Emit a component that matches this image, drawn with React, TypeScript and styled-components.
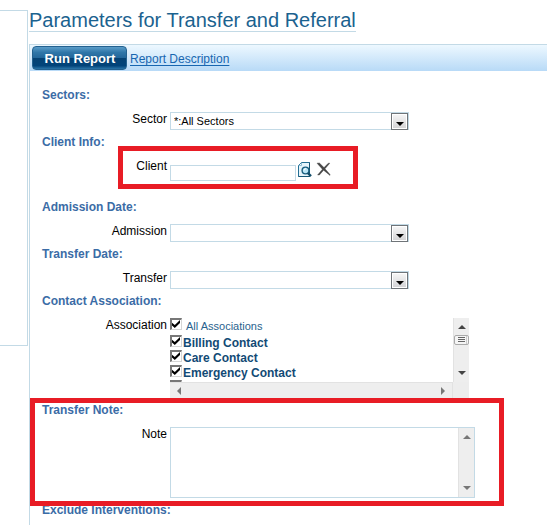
import React from "react";
import styled, { createGlobalStyle, css } from "styled-components";

const line = "#c3dae6";
const sans = '"Liberation Sans", Arial, sans-serif';

const GlobalStyle = createGlobalStyle`
  *, *::before, *::after { box-sizing: border-box; }
  body { margin: 0; background: #fff; font-family: ${sans}; font-size: 12px; color: #000; }
  button, input, select, textarea { font-family: inherit; margin: 0; }
`;

const Page = styled.div`
  display: flex;
  align-items: flex-start;
  gap: 1px;
  min-height: 100vh;
`;

const SidePanel = styled.aside`
  flex: 0 0 28px;
  height: 336px;
  margin-top: 10px;
  border: 1px solid ${line};
  border-left: 0;
`;

const Main = styled.main`
  flex: 1;
  min-width: 0;
  min-height: 100vh;
  padding-top: 9px;
  display: flex;
  flex-direction: column;
  align-items: flex-start;
`;

const Title = styled.h1`
  margin: 0 0 12px;
  border-bottom: 1px solid ${line};
  font-size: 20px;
  line-height: 22px;
  font-weight: 400;
  color: #1b628f;
  white-space: nowrap;
`;

const Panel = styled.div`
  align-self: stretch;
  flex: 1;
  border-top: 1px solid ${line};
  border-left: 1px solid ${line};
`;

const Toolbar = styled.div`
  display: flex;
  align-items: center;
  gap: 3px;
  height: 26px;
  padding-left: 2px;
  background: linear-gradient(#edf8ff, #b8daf7);
`;

const RunButton = styled.button`
  width: 95px;
  height: 24px;
  padding: 0 0 0 1px;
  border: 1px solid #23618f;
  border-radius: 4px;
  background: linear-gradient(#5a9cc8 0%, #2f76a8 25%, #22669a 50%, #054273 51%, #02447a 85%, #2b75a8 100%);
  color: #fff;
  font-size: 13px;
  font-weight: 700;
`;

const ToolbarLink = styled.a`
  color: #1766b0;
  font-size: 12px;
  line-height: 16px;
  padding-top: 2px;
  text-underline-offset: 2px;
`;

const Form = styled.form`
  display: flex;
  flex-direction: column;
  padding: 17px 0 0 12px;
`;

const Section = styled.section`
  position: relative;
  padding-bottom: 5px;
`;

const Heading = styled.h2`
  margin: 0;
  font-size: 12px;
  line-height: 14px;
  font-weight: 700;
  color: #3b6ca6;
`;

const Row = styled.div`
  display: grid;
  grid-template-columns: 125px minmax(0, 1fr);
  column-gap: 3px;
  align-items: start;
  padding-top: 10px;
`;

const labelStyle = css`
  font-size: 12px;
  line-height: 14px;
  text-align: right;
`;
const Label = styled.label`${labelStyle}`;
const GroupLabel = styled.span`${labelStyle}`;

const SelectBox = styled.div`
  display: grid;
  width: 239px;
  max-width: 100%;
  > * { grid-area: 1 / 1; }
`;

const Select = styled.select`
  appearance: none;
  width: 100%;
  height: 18px;
  padding: 0 20px 0 3px;
  border: 1px solid ${line};
  border-radius: 0;
  background: #fff;
  color: #000;
  font-size: 11px;
`;

const DropArrow = styled.span`
  justify-self: end;
  display: flex;
  align-items: flex-end;
  justify-content: center;
  width: 17px;
  height: 17px;
  margin: 1px 1px 0 0;
  padding-bottom: 3px;
  border: 1px solid #6f7478;
  background: linear-gradient(#f7f7f7, #d2d2d4);
  box-shadow: inset 0 0 0 1px #fff;
  pointer-events: none;
`;

const ClientField = styled.div`
  display: flex;
  align-items: flex-start;
  padding-top: 3px;
  height: 36px;
`;

const ClientInput = styled.input`
  width: 126px;
  height: 16px;
  margin-top: 3px;
  padding: 0 3px;
  border: 1px solid ${line};
  background: #fff;
  font-size: 11px;
`;

const IconButton = styled.button`
  display: flex;
  width: 16px;
  height: 16px;
  margin-left: 2px;
  padding: 0;
  border: 0;
  background: none;
`;

const Associations = styled.div`
  display: grid;
  grid-template-columns: minmax(0, 1fr) 16px;
  grid-template-rows: 64px 16px;
  width: 299px;
  max-width: 100%;
`;

const CheckList = styled.ul`
  margin: 0;
  padding: 0;
  overflow: hidden;
  list-style: none;
`;

const CheckRow = styled.li<{ $all?: boolean }>`
  display: flex;
  gap: ${(p) => (p.$all ? "4px" : "1px")};
  height: ${(p) => (p.$all ? "17px" : "15px")};
  font-size: ${(p) => (p.$all ? "11px" : "12px")};
  font-weight: ${(p) => (p.$all ? 400 : 700)};
  line-height: 17px;
  color: ${(p) => (p.$all ? "#2a638e" : "#124a75")};
  white-space: nowrap;
`;

const Check = styled.input`
  appearance: none;
  flex: none;
  width: 12px;
  height: 12px;
  border: 1px solid #d6d6d6;
  border-top: 2px solid #777;
  border-left: 2px solid #777;
  background: #fff;
  &:checked::before {
    content: "";
    display: block;
    width: 8px;
    height: 8px;
    background: #000;
    clip-path: polygon(0 35%, 35% 62%, 100% 0, 100% 38%, 35% 100%, 0 70%);
  }
`;

const ScrollBar = styled.div<{ $horizontal?: boolean }>`
  display: flex;
  flex-direction: ${(p) => (p.$horizontal ? "row" : "column")};
  align-items: center;
  justify-content: space-between;
  padding: ${(p) => (p.$horizontal ? "0 5px" : "5px 0")};
  border: 0 solid #e2e2e2;
  border-width: ${(p) => (p.$horizontal ? "1px 1px 0 0" : "0 0 0 1px")};
  background: #eeeeee;
`;

const ThumbGrip = styled.svg`
  flex: none;
  margin: 4px 0 auto;
`;

const Corner = styled.div`
  background: #ededed;
`;

const NoteBox = styled.div`
  display: grid;
  grid-template-columns: minmax(0, 1fr) 16px;
  width: 305px;
  max-width: 100%;
  height: 71px;
  border: 1px solid ${line};
`;

const NoteArea = styled.textarea`
  width: 100%;
  height: 100%;
  padding: 2px;
  border: 0;
  resize: none;
  background: #fff;
  font-size: 11px;
  overflow: hidden;
`;

const Highlight = styled.div<{ $kind: "client" | "note" }>`
  position: absolute;
  border: 5px solid #e81c25;
  pointer-events: none;
  z-index: 1;
  ${(p) =>
    p.$kind === "client"
      ? css`top: 11px; left: 76px; width: 240px; height: 43px;`
      : css`top: -5px; left: -12px; width: 474px; height: 108px;`}
`;

type Direction = "up" | "down" | "left" | "right";
const arrowPaths: Record<Direction, string> = {
  up: "M0 6 L4 2 L8 6 Z",
  down: "M0 2 L8 2 L4 6 Z",
  left: "M2 4 L6 0 V8 Z",
  right: "M2 0 L6 4 L2 8 Z",
};

function Arrow({ to, color = "#777" }: { to: Direction; color?: string }) {
  return (
    <svg width="8" height="8" viewBox="0 0 8 8" aria-hidden="true">
      <path d={arrowPaths[to]} fill={color} />
    </svg>
  );
}

function Thumb() {
  return (
    <ThumbGrip width="15" height="10" viewBox="0 0 15 10" aria-hidden="true">
      <rect x="0.5" y="0.5" width="14" height="9" rx="1.5" fill="#f5f5f5" stroke="#aaa" />
      <path d="M4 2.5h7M4 4.5h7M4 6.5h7" stroke="#666" />
      <path d="M12.5 1v8" stroke="#ccc" />
    </ThumbGrip>
  );
}

function SearchIcon() {
  return (
    <svg width="16" height="16" viewBox="0 0 16 16" aria-hidden="true">
      <path d="M.5 14.5V3.5L3.5.5h8v14z" fill="#e6f4fb" stroke="#236f94" />
      <path d="M1 3.5h2.5V1" fill="#fff" stroke="#8bbdd4" />
      <path d="M11.5.5v14H.5" fill="none" stroke="#165675" />
      <circle cx="7.5" cy="8.5" r="3.4" fill="#b9e4f5" stroke="#185d7e" strokeWidth="1.4" />
      <path d="M6 8.5a2 2 0 0 1 2-1.8" fill="none" stroke="#fff" />
      <path d="M9.8 11 13 14.2" stroke="#124c69" strokeWidth="2.4" />
    </svg>
  );
}

function ClearIcon() {
  return (
    <svg width="16" height="16" viewBox="0 0 16 16" aria-hidden="true">
      <path d="M1 1.2 3.4 1 8 5.6 12.3 1.2h1.5L9 6.8l5 5.6v1L7.6 8.2 3.4 13 1.6 13 6.4 7.2z" fill="#454545" stroke="#454545" strokeWidth="0.4" />
    </svg>
  );
}

function SelectField({ id, label, options }: { id: string; label: string; options: string[] }) {
  return (
    <Row>
      <Label htmlFor={id}>{label}</Label>
      <SelectBox>
        <Select id={id}>
          {options.map((o) => (
            <option key={o}>{o}</option>
          ))}
        </Select>
        <DropArrow>
          <svg width="8" height="4" viewBox="0 0 8 4" aria-hidden="true">
            <path d="M0 0h8L4 4z" fill="#000" />
          </svg>
        </DropArrow>
      </SelectBox>
    </Row>
  );
}

const contacts = ["Billing Contact", "Care Contact", "Emergency Contact", ""];

export default function App() {
  return (
    <>
      <GlobalStyle />
      <Page>
        <SidePanel />
        <Main>
          <Title>Parameters for Transfer and Referral</Title>
          <Panel>
            <Toolbar>
              <RunButton type="submit" form="parameters">Run Report</RunButton>
              <ToolbarLink href="#description">Report Description</ToolbarLink>
            </Toolbar>
            <Form id="parameters" onSubmit={(e) => e.preventDefault()}>
              <Section>
                <Heading>Sectors:</Heading>
                <SelectField id="sector" label="Sector" options={["*:All Sectors"]} />
              </Section>
              <Section>
                <Heading>Client Info:</Heading>
                <Row>
                  <Label htmlFor="client">Client</Label>
                  <ClientField>
                    <ClientInput id="client" type="text" />
                    <IconButton type="button" aria-label="Find client"><SearchIcon /></IconButton>
                    <IconButton type="button" aria-label="Clear client"><ClearIcon /></IconButton>
                  </ClientField>
                </Row>
                <Highlight $kind="client" />
              </Section>
              <Section>
                <Heading>Admission Date:</Heading>
                <SelectField id="admission" label="Admission" options={[""]} />
              </Section>
              <Section>
                <Heading>Transfer Date:</Heading>
                <SelectField id="transfer" label="Transfer" options={[""]} />
              </Section>
              <Section>
                <Heading>Contact Association:</Heading>
                <Row role="group" aria-labelledby="association">
                  <GroupLabel id="association">Association</GroupLabel>
                  <Associations>
                    <CheckList>
                      <CheckRow $all>
                        <Check id="all" type="checkbox" defaultChecked />
                        <label htmlFor="all">All Associations</label>
                      </CheckRow>
                      {contacts.map((name, i) => (
                        <CheckRow key={i}>
                          <Check id={`contact-${i}`} type="checkbox" defaultChecked />
                          <label htmlFor={`contact-${i}`}>{name}</label>
                        </CheckRow>
                      ))}
                    </CheckList>
                    <ScrollBar>
                      <Arrow to="up" color="#444" />
                      <Thumb />
                      <Arrow to="down" color="#444" />
                    </ScrollBar>
                    <ScrollBar $horizontal>
                      <Arrow to="left" />
                      <Arrow to="right" />
                    </ScrollBar>
                    <Corner />
                  </Associations>
                </Row>
              </Section>
              <Section>
                <Heading>Transfer Note:</Heading>
                <Row>
                  <Label htmlFor="note">Note</Label>
                  <NoteBox>
                    <NoteArea id="note" />
                    <ScrollBar>
                      <Arrow to="up" />
                      <Arrow to="down" />
                    </ScrollBar>
                  </NoteBox>
                </Row>
                <Highlight $kind="note" />
              </Section>
              <Heading>Exclude Interventions:</Heading>
            </Form>
          </Panel>
        </Main>
      </Page>
    </>
  );
}
